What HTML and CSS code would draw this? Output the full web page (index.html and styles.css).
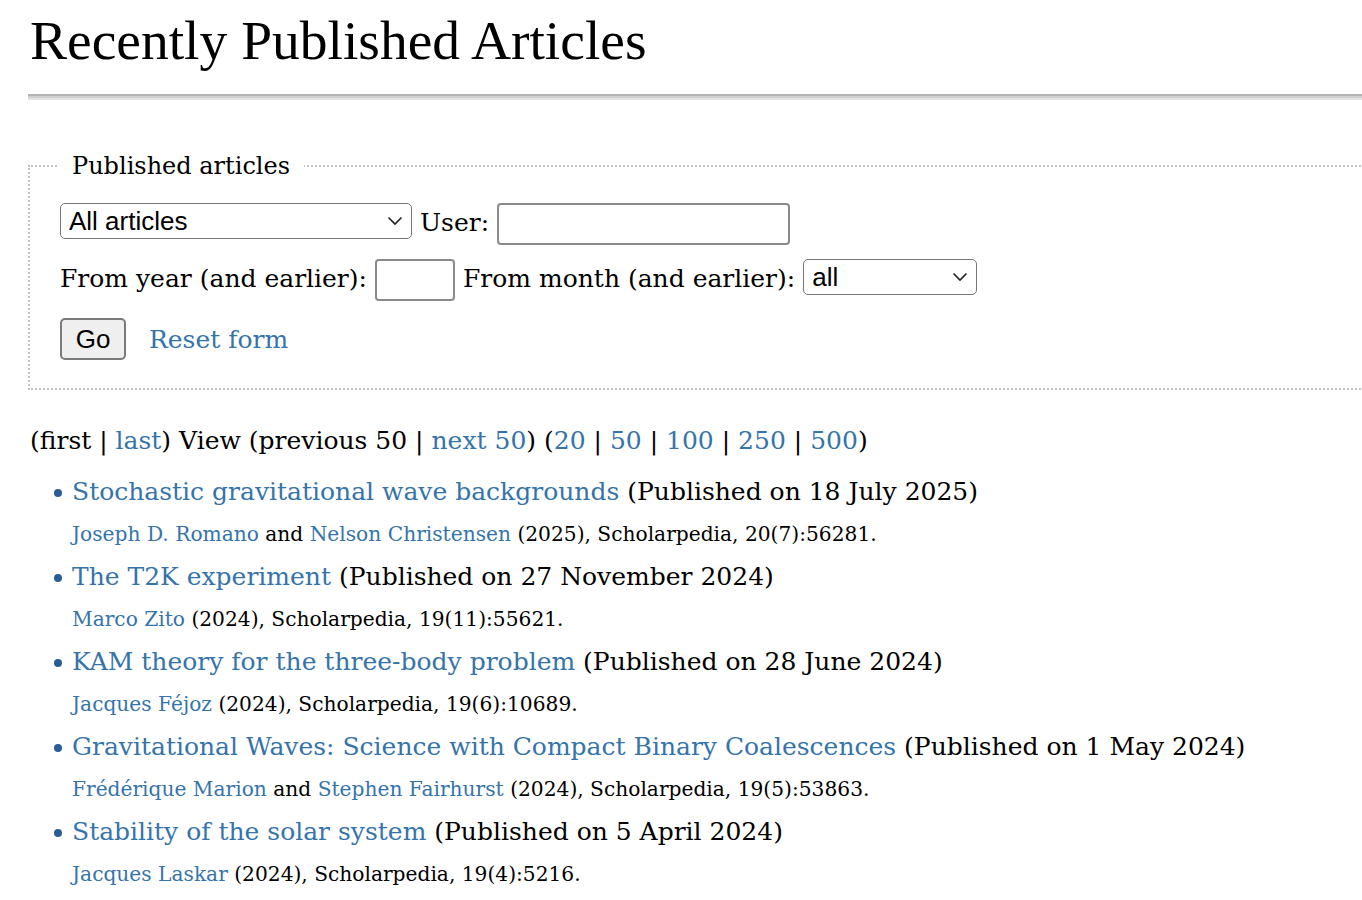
FILE: index.html
```html
<!DOCTYPE html>
<html lang="en">
<head>
<meta charset="utf-8">
<title>Recently Published Articles</title>
<link rel="stylesheet" href="styles.css">
</head>
<body>
<div class="page">
  <h1 class="title">Recently Published Articles</h1>
  <hr class="rule">
  <form class="filter">
    <fieldset class="box">
      <legend class="legend">Published articles</legend>
      <div class="row">
        <span class="sel sel-wide">
          <select class="select"><option>All articles</option></select>
          <svg class="chev" width="16" height="10" viewBox="0 0 16 10"><polyline points="1.5,1.5 8,8 14.5,1.5" fill="none" stroke="#222" stroke-width="1.6"/></svg>
        </span>
        <label class="lbl">User:</label>
        <input class="txt txt-user" type="text">
      </div>
      <div class="row">
        <label class="lbl">From year (and earlier):</label>
        <input class="txt txt-year" type="text">
        <label class="lbl">From month (and earlier):</label>
        <span class="sel sel-month">
          <select class="select"><option>all</option></select>
          <svg class="chev" width="16" height="10" viewBox="0 0 16 10"><polyline points="1.5,1.5 8,8 14.5,1.5" fill="none" stroke="#222" stroke-width="1.6"/></svg>
        </span>
      </div>
      <div class="row row-actions">
        <button class="btn" type="button">Go</button>
        <a class="link" href="#">Reset form</a>
      </div>
    </fieldset>
  </form>
  <p class="pager">(first | <a class="link" href="#">last</a>) View (previous 50 | <a class="link" href="#">next 50</a>) (<a class="link" href="#">20</a> | <a class="link" href="#">50</a> | <a class="link" href="#">100</a> | <a class="link" href="#">250</a> | <a class="link" href="#">500</a>)</p>
  <ul class="articles">
    <li class="article">
      <div class="headline"><a class="link" href="#">Stochastic gravitational wave backgrounds</a> (Published on 18 July 2025)</div>
      <div class="cite"><a class="link" href="#">Joseph D. Romano</a> and <a class="link" href="#">Nelson Christensen</a> (2025), Scholarpedia, 20(7):56281.</div>
    </li>
    <li class="article">
      <div class="headline"><a class="link" href="#">The T2K experiment</a> (Published on 27 November 2024)</div>
      <div class="cite"><a class="link" href="#">Marco Zito</a> (2024), Scholarpedia, 19(11):55621.</div>
    </li>
    <li class="article">
      <div class="headline"><a class="link" href="#">KAM theory for the three-body problem</a> (Published on 28 June 2024)</div>
      <div class="cite"><a class="link" href="#">Jacques Féjoz</a> (2024), Scholarpedia, 19(6):10689.</div>
    </li>
    <li class="article">
      <div class="headline"><a class="link" href="#">Gravitational Waves: Science with Compact Binary Coalescences</a> (Published on 1 May 2024)</div>
      <div class="cite"><a class="link" href="#">Frédérique Marion</a> and <a class="link" href="#">Stephen Fairhurst</a> (2024), Scholarpedia, 19(5):53863.</div>
    </li>
    <li class="article">
      <div class="headline"><a class="link" href="#">Stability of the solar system</a> (Published on 5 April 2024)</div>
      <div class="cite"><a class="link" href="#">Jacques Laskar</a> (2024), Scholarpedia, 19(4):5216.</div>
    </li>
  </ul>
</div>
</body>
</html>
```
FILE: styles.css
```css
html, body {
  margin: 0;
  padding: 0;
  background: #fff;
  overflow: hidden;
}
.page {
  width: 1400px;
  padding-left: 28px;
  font-family: "DejaVu Serif", "Liberation Serif", serif;
  font-size: 25px;
  color: #000;
}
.title {
  font-family: "Liberation Serif", serif;
  font-weight: normal;
  font-size: 55.5px;
  line-height: 62px;
  margin: 10px 0 0 2px;
}
.rule {
  margin: 22px 0 0 0;
  height: 2px;
  border: 0;
  border-top: 2px solid #b4b4b4;
  border-bottom: 2px solid #e2e2e2;
  background: #d0d0d0;
}
.filter {
  margin: 49px 0 0 0;
}
.box {
  margin: 0;
  border: 2px dotted #c2c2c2;
  padding: 20px 0 28px 30px;
}
.legend {
  padding: 0 14px;
  margin-left: -2px;
  font-size: 24px;
  line-height: 34px;
}
.row {
  display: flex;
  align-items: flex-start;
  gap: 8px;
  margin-top: 14px;
  height: 42px;
}
.row:first-of-type {
  margin-top: 0;
}
.row-actions {
  align-items: center;
  gap: 23px;
  margin-top: 17px;
}
.lbl {
  white-space: nowrap;
  line-height: 40px;
}
.sel {
  position: relative;
  display: inline-block;
}
.select {
  appearance: none;
  -webkit-appearance: none;
  font-family: "Liberation Sans", Arial, sans-serif;
  font-size: 26px;
  color: #000;
  background: #fff;
  border: 1px solid #767676;
  border-radius: 5px;
  height: 36px;
  padding: 0 30px 0 8px;
  margin: 0;
  display: block;
}
.sel-wide .select {
  width: 352px;
}
.sel-month .select {
  width: 174px;
}
.chev {
  position: absolute;
  right: 9px;
  top: 13px;
  pointer-events: none;
}
.txt {
  box-sizing: border-box;
  height: 42px;
  border: 2px solid #8a8a8a;
  border-radius: 4px;
  margin: 0;
  padding: 0 6px;
  font-size: 24px;
  background: #fff;
}
.txt-user {
  width: 293px;
}
.txt-year {
  width: 80px;
}
.btn {
  box-sizing: border-box;
  width: 66px;
  height: 42px;
  font-family: "Liberation Sans", Arial, sans-serif;
  font-size: 26px;
  color: #000;
  background: #efefef;
  border: 2px solid #7a7a7a;
  border-radius: 5px;
  padding: 0;
  margin: 0;
}
.link {
  color: #3574ab;
  text-decoration: none;
}
.pager {
  margin: 33px 0 0 2px;
  line-height: 36px;
}
.articles {
  list-style: none;
  margin: 11px 0 0 0;
  padding: 0 0 0 44px;
}
.article {
  position: relative;
}
.article::before {
  content: "";
  position: absolute;
  left: -18px;
  top: 19px;
  width: 8px;
  height: 8px;
  border-radius: 50%;
  background: #2a5d93;
}
.headline {
  line-height: 44px;
}
.cite {
  font-size: 20.2px;
  line-height: 41px;
}
```
